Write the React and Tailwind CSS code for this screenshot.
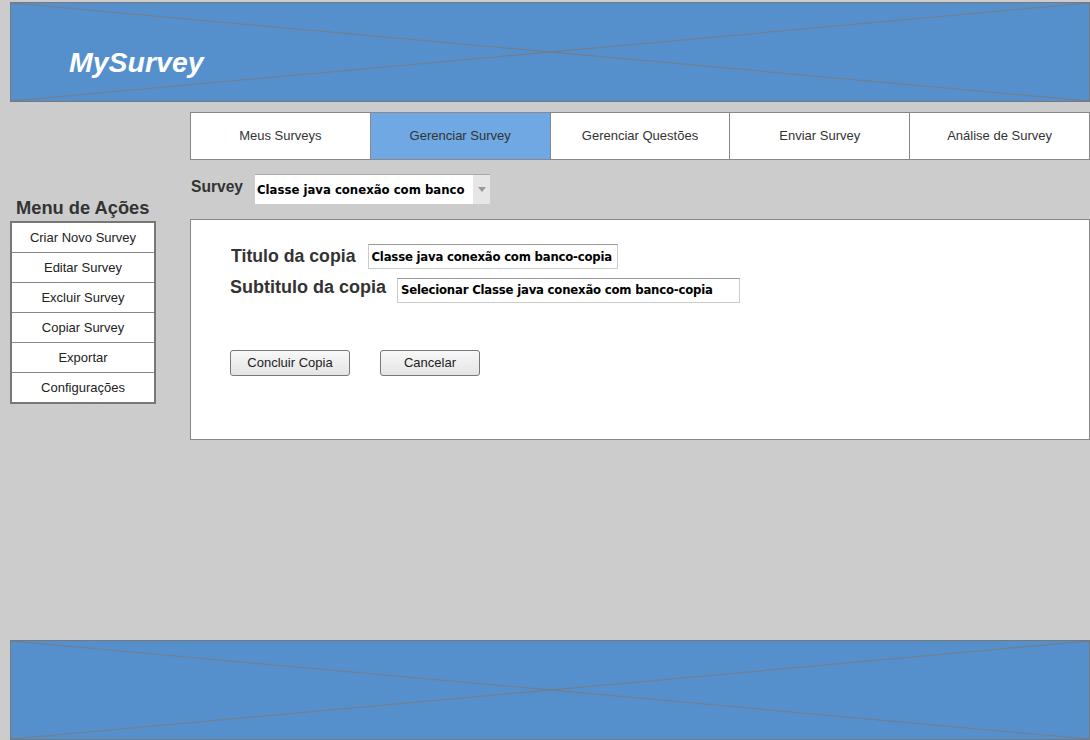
import React from "react";

function XBox({ className = "", children }) {
  return (
    <div className={`relative border border-[#787878] bg-[#5590cc] ${className}`}>
      <svg className="absolute inset-0 h-full w-full" preserveAspectRatio="none" viewBox="0 0 100 100">
        <line x1="0" y1="0" x2="100" y2="100" stroke="#6e7f93" strokeWidth="1.2" vectorEffect="non-scaling-stroke" />
        <line x1="0" y1="100" x2="100" y2="0" stroke="#6e7f93" strokeWidth="1.2" vectorEffect="non-scaling-stroke" />
      </svg>
      {children}
    </div>
  );
}

const tabs = ["Meus Surveys", "Gerenciar Survey", "Gerenciar Questões", "Enviar Survey", "Análise de Survey"];
const menu = ["Criar Novo Survey", "Editar Survey", "Excluir Survey", "Copiar Survey", "Exportar", "Configurações"];
const inputFont = { fontFamily: '"DejaVu Sans Condensed", "DejaVu Sans", Verdana, sans-serif' };

export default function App() {
  return (
    <div
      className="flex h-[740px] w-[1090px] flex-col bg-[#cccccc] pt-[2px]"
      style={{ fontFamily: '"Liberation Sans", Arial, sans-serif' }}
    >
      <XBox className="ml-[10px] h-[100px] w-[1080px] shrink-0">
        <div className="relative pl-[58px] pt-[41px] text-[28.5px] font-bold italic leading-[36px] text-white">
          MySurvey
        </div>
      </XBox>

      <div className="mt-[10px] flex">
        <div className="ml-[10px] w-[146px] pt-[85px]">
          <div className="whitespace-nowrap pl-[6px] text-[18.3px] font-bold leading-[21px] text-[#333]">Menu de Ações</div>
          <div className="mt-[3px] border-2 border-[#777] bg-white">
            {menu.map((m, i) => (
              <div
                key={m}
                className={`flex items-center justify-center text-[13px] text-[#222] ${i > 0 ? "h-[30px] border-t border-[#888]" : "h-[29px]"}`}
              >
                {m}
              </div>
            ))}
          </div>
        </div>

        <div className="ml-[34px] w-[900px]">
          <div className="flex h-[48px] border border-[#888] bg-white">
            {tabs.map((t, i) => (
              <div
                key={t}
                className={`flex h-full flex-1 items-center justify-center text-[13px] text-[#333] ${i > 0 ? "border-l border-[#888]" : ""} ${i === 1 ? "bg-[#6fa8e2]" : ""}`}
              >
                {t}
              </div>
            ))}
          </div>

          <div className="mt-[14px] flex items-start">
            <div className="ml-[1px] pt-[4px] text-[15.6px] font-bold leading-[18px] text-[#333]">Survey</div>
            <div className="ml-[12px] flex h-[30px] w-[235px] border-t border-[#aaa] bg-white">
              <div className="flex min-w-0 flex-1 items-center overflow-hidden whitespace-nowrap pl-[2px] text-[13px] font-bold text-black" style={inputFont}>
                Classe java conexão com banco
              </div>
              <div className="flex w-[17px] shrink-0 items-center justify-center bg-[#e6e6e6]">
                <svg width="8" height="5" viewBox="0 0 8 5">
                  <path d="M0 0 L8 0 L4 5 Z" fill="#999" />
                </svg>
              </div>
            </div>
          </div>

          <div className="mt-[15px] h-[221px] border border-[#888] bg-white pl-[39px] pt-[23px]">
            <div className="flex items-center">
              <div className="ml-[1px] whitespace-nowrap text-[17.7px] font-bold text-[#333]">Titulo da copia</div>
              <div
                className="ml-[13px] flex h-[25px] w-[250px] items-center whitespace-nowrap border border-[#ccc] border-t-[#999] pl-[2px] text-[13px] font-bold tracking-[-0.2px] text-black"
                style={inputFont}
              >
                Classe java conexão com banco-copia
              </div>
            </div>
            <div className="mt-[7px] flex items-start">
              <div className="whitespace-nowrap text-[18px] font-bold leading-[21px] text-[#333]">Subtitulo da copia</div>
              <div
                className="ml-[11px] mt-[1px] flex h-[25px] w-[343px] items-center whitespace-nowrap border border-[#ccc] border-t-[#999] pl-[3px] text-[13px] font-bold tracking-[-0.2px] text-black"
                style={inputFont}
              >
                Selecionar Classe java conexão com banco-copia
              </div>
            </div>
            <div className="mt-[47px] flex gap-[30px]">
              <div className="flex h-[26px] w-[120px] items-center justify-center rounded-[3px] border border-[#777] bg-gradient-to-b from-[#f8f8f8] to-[#e4e4e4] text-[13px] text-[#222]">
                Concluir Copia
              </div>
              <div className="flex h-[26px] w-[100px] items-center justify-center rounded-[3px] border border-[#777] bg-gradient-to-b from-[#f8f8f8] to-[#e4e4e4] text-[13px] text-[#222]">
                Cancelar
              </div>
            </div>
          </div>
        </div>
      </div>

      <XBox className="ml-[10px] mt-auto h-[100px] w-[1080px] shrink-0" />
    </div>
  );
}
